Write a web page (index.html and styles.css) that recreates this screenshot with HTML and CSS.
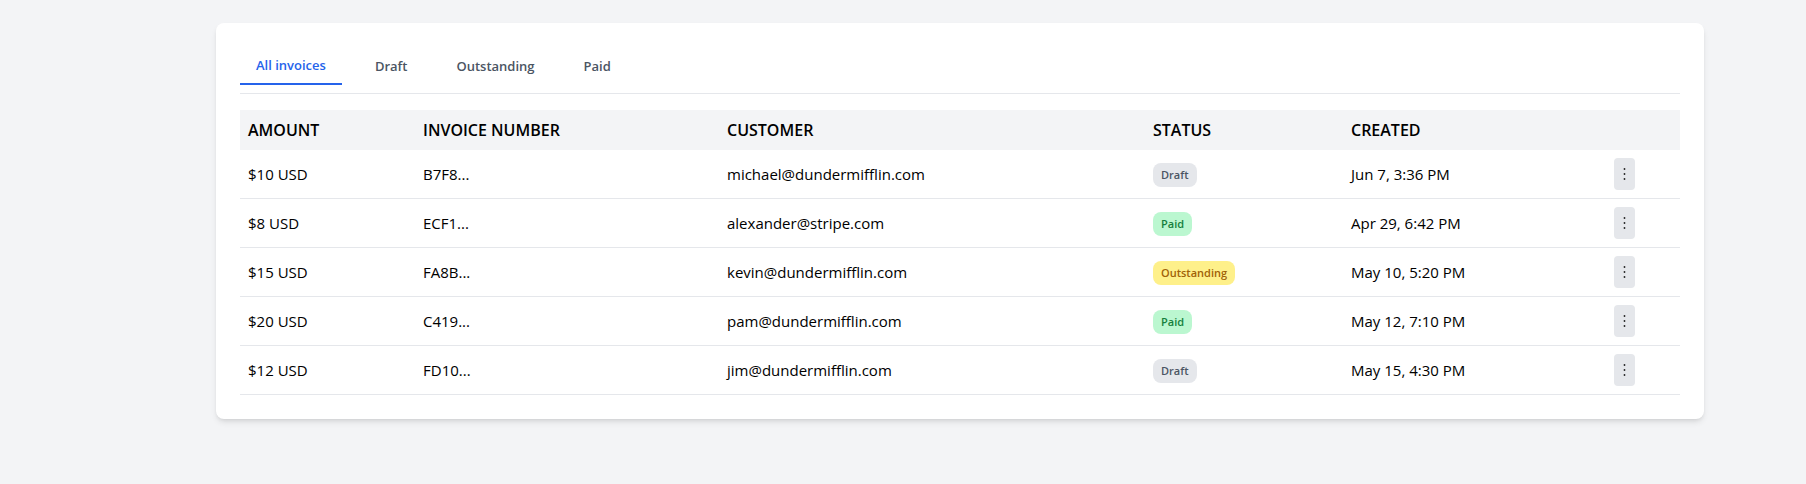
FILE: index.html
```html
<!DOCTYPE html>
<html lang="en">
<head>
<meta charset="utf-8">
<meta name="viewport" content="width=device-width, initial-scale=1">
<title>Invoices</title>
<link rel="stylesheet" href="styles.css">
</head>
<body>
<main class="page">
  <section class="card">
    <nav class="tabs" aria-label="Invoice filter">
      <button type="button" class="tab tab-active">All invoices</button>
      <button type="button" class="tab">Draft</button>
      <button type="button" class="tab">Outstanding</button>
      <button type="button" class="tab">Paid</button>
    </nav>
    <table class="invoices">
      <colgroup>
        <col class="col-amount">
        <col class="col-number">
        <col class="col-customer">
        <col class="col-status">
        <col class="col-created">
        <col class="col-actions">
      </colgroup>
      <thead>
        <tr><th>AMOUNT</th><th>INVOICE NUMBER</th><th>CUSTOMER</th><th>STATUS</th><th>CREATED</th><th></th></tr>
      </thead>
      <tbody>
        <tr><td>$10 USD</td><td>B7F8...</td><td>michael@dundermifflin.com</td><td><span class="badge badge-draft">Draft</span></td><td>Jun 7, 3:36 PM</td><td><button type="button" class="more" aria-label="Actions"><svg class="dots" viewBox="0 0 5 12" aria-hidden="true"><circle cx="2.5" cy="1" r="0.9"/><circle cx="2.5" cy="6" r="0.9"/><circle cx="2.5" cy="11" r="0.9"/></svg></button></td></tr>
        <tr><td>$8 USD</td><td>ECF1...</td><td>alexander@stripe.com</td><td><span class="badge badge-paid">Paid</span></td><td>Apr 29, 6:42 PM</td><td><button type="button" class="more" aria-label="Actions"><svg class="dots" viewBox="0 0 5 12" aria-hidden="true"><circle cx="2.5" cy="1" r="0.9"/><circle cx="2.5" cy="6" r="0.9"/><circle cx="2.5" cy="11" r="0.9"/></svg></button></td></tr>
        <tr><td>$15 USD</td><td>FA8B...</td><td>kevin@dundermifflin.com</td><td><span class="badge badge-outstanding">Outstanding</span></td><td>May 10, 5:20 PM</td><td><button type="button" class="more" aria-label="Actions"><svg class="dots" viewBox="0 0 5 12" aria-hidden="true"><circle cx="2.5" cy="1" r="0.9"/><circle cx="2.5" cy="6" r="0.9"/><circle cx="2.5" cy="11" r="0.9"/></svg></button></td></tr>
        <tr><td>$20 USD</td><td>C419...</td><td>pam@dundermifflin.com</td><td><span class="badge badge-paid">Paid</span></td><td>May 12, 7:10 PM</td><td><button type="button" class="more" aria-label="Actions"><svg class="dots" viewBox="0 0 5 12" aria-hidden="true"><circle cx="2.5" cy="1" r="0.9"/><circle cx="2.5" cy="6" r="0.9"/><circle cx="2.5" cy="11" r="0.9"/></svg></button></td></tr>
        <tr><td>$12 USD</td><td>FD10...</td><td>jim@dundermifflin.com</td><td><span class="badge badge-draft">Draft</span></td><td>May 15, 4:30 PM</td><td><button type="button" class="more" aria-label="Actions"><svg class="dots" viewBox="0 0 5 12" aria-hidden="true"><circle cx="2.5" cy="1" r="0.9"/><circle cx="2.5" cy="6" r="0.9"/><circle cx="2.5" cy="11" r="0.9"/></svg></button></td></tr>
      </tbody>
    </table>
  </section>
</main>
</body>
</html>
```

FILE: styles.css
```css
* {
  box-sizing: border-box;
}

body {
  margin: 0;
  background: #f3f4f6;
  color: #000;
  font-family: "Segoe UI", "Open Sans", "Noto Sans", sans-serif;
  font-size: 15px;
  line-height: 24px;
}

button {
  border: 0;
  font-family: inherit;
  cursor: pointer;
}

.page {
  padding: 23px 0 24px 114px;
}

.card {
  max-width: 1488px;
  margin: 0 auto;
  padding: 24px;
  border-radius: 8px;
  background: #fff;
  box-shadow: 0 4px 6px -1px rgb(0 0 0 / 0.1), 0 2px 4px -2px rgb(0 0 0 / 0.1);
}

.tabs {
  display: flex;
  align-items: center;
  gap: 17px;
  margin-bottom: 16px;
  padding-bottom: 8px;
  border-bottom: 1px solid #e5e7eb;
}

.tab {
  padding: 8px 16px;
  background: transparent;
  color: #4b5563;
  font-size: 13px;
  font-weight: 600;
  line-height: 20px;
}

.tab-active {
  border-bottom: 2px solid #2563eb;
  color: #2563eb;
}

.invoices {
  width: 100%;
  table-layout: fixed;
  border-collapse: separate;
  border-spacing: 0;
  text-align: left;
}

.col-amount { width: 175px; }
.col-number { width: 304px; }
.col-customer { width: 426px; }
.col-status { width: 198px; }
.col-created { width: 263px; }
.col-actions { width: 74px; }

.invoices th {
  height: 40px;
  padding: 8px;
  background: #f3f4f6;
  font-size: 16px;
  font-weight: 600;
}

.invoices td {
  padding: 8px;
  border-bottom: 1px solid #e5e7eb;
}

.badge {
  display: inline-block;
  padding: 4px 8px;
  border-radius: 8px;
  font-size: 11px;
  font-weight: 600;
  line-height: 16px;
  vertical-align: middle;
}

.badge-draft {
  background: #e5e7eb;
  color: #4b5563;
}

.badge-paid {
  background: #bbf7d0;
  color: #15803d;
}

.badge-outstanding {
  background: #fef08a;
  color: #a16207;
}

.more {
  display: flex;
  align-items: center;
  padding: 10px 8px;
  border-radius: 4px;
  background: #e5e7eb;
}

.dots {
  display: block;
  width: 5px;
  height: 12px;
  fill: #222;
}
```
